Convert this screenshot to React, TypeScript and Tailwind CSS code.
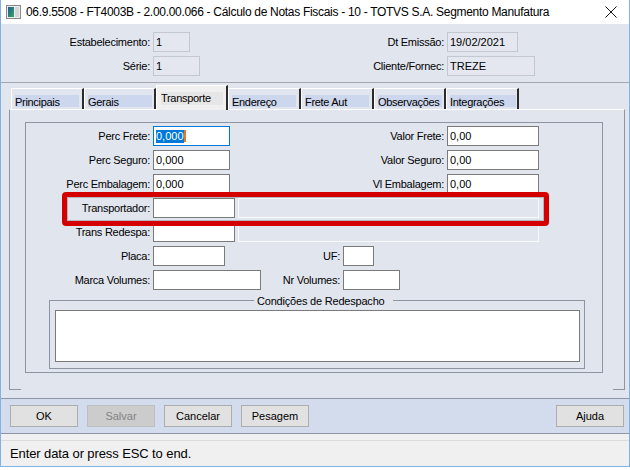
import React from "react";

type Kind = "edit" | "ro" | "dis" | "focus";
const KIND: Record<Kind, string> = {
  edit: "bg-white border-[#7a7a7a]",
  ro: "bg-[#e4e7ef] border-[#c3c7cf]",
  dis: "bg-[#e1e5ee] border-[#f8f9fb]",
  focus: "bg-white border-[#0078d7]",
};

function Field({ w, kind = "edit", children }: { w: string; kind?: Kind; children?: React.ReactNode }) {
  return (
    <div
      className={`${w} ${KIND[kind]} h-[20px] shrink-0 border flex items-center pl-[2px] text-[11px] leading-none text-black whitespace-nowrap overflow-hidden`}
    >
      {children}
    </div>
  );
}

function Label({ w, children }: { w: string; children: React.ReactNode }) {
  return (
    <div className={`${w} shrink-0 text-right pr-[3px] text-[11px] tracking-[-0.25px] leading-none text-black whitespace-nowrap`}>
      {children}
    </div>
  );
}

const TABS = [
  { t: "Principais", w: "w-[73px]", r: "w-[64px]" },
  { t: "Gerais", w: "w-[72px]", r: "w-[64px]" },
  { t: "Transporte", w: "w-[72px]", r: "w-[62px]", active: true },
  { t: "Endereço", w: "w-[73px]", r: "w-[64px]" },
  { t: "Frete Aut", w: "w-[73px]", r: "w-[64px]" },
  { t: "Observações", w: "w-[72px]", r: "w-[64px]" },
  { t: "Integrações", w: "w-[73px]", r: "w-[66px]" },
];

function Btn({ children, disabled }: { children: React.ReactNode; disabled?: boolean }) {
  return (
    <div
      className={`w-[68px] h-[22px] shrink-0 border flex items-center justify-center text-[11px] leading-none ${
        disabled ? "bg-[#cccccc] border-[#bfbfbf] text-[#838383]" : "bg-[#e1e1e1] border-[#adadad] text-black"
      }`}
    >
      {children}
    </div>
  );
}

export default function App() {
  return (
    <div className="w-[630px] h-[467px] border-x border-b border-[#7fb2e5] bg-[#e1e5ee] flex flex-col overflow-hidden font-['Liberation_Sans',Arial,sans-serif] text-black">
      {/* Title bar */}
      <div className="h-[24px] shrink-0 bg-white flex items-center">
        <svg className="ml-[5px] shrink-0" width="15" height="14" viewBox="0 0 15 14">
          <defs>
            <linearGradient id="ic" x1="0" y1="0" x2="1" y2="1">
              <stop offset="0" stopColor="#1d5d8c" />
              <stop offset="1" stopColor="#3aa36b" />
            </linearGradient>
          </defs>
          <rect x="0.5" y="0.5" width="14" height="13" fill="#ececec" stroke="#8a8a8a" />
          <rect x="2" y="2" width="6" height="10" fill="url(#ic)" />
          <rect x="9" y="2" width="4" height="10" fill="#d6d6d6" />
        </svg>
        <div className="ml-[5px] text-[12px] tracking-[-0.3px] whitespace-nowrap leading-none">
          06.9.5508 - FT4003B - 2.00.00.066 - Cálculo de Notas Fiscais - 10 - TOTVS S.A. Segmento Manufatura
        </div>
        <div className="flex-1" />
        <svg className="mr-[12px] shrink-0" width="12" height="12" viewBox="0 0 12 12">
          <path d="M0.5 0.5 L11.5 11.5 M11.5 0.5 L0.5 11.5" stroke="#111" strokeWidth="1" />
        </svg>
      </div>

      {/* Header */}
      <div className="shrink-0 pt-[8px] pb-[6px] border-b border-[#a2a7b1] flex flex-col gap-[4px]">
        <div className="flex items-center h-[20px]">
          <Label w="w-[152px]">Estabelecimento:</Label>
          <Field w="w-[37px]" kind="ro">1</Field>
          <Label w="w-[257px]">Dt Emissão:</Label>
          <Field w="w-[71px]" kind="ro">19/02/2021</Field>
        </div>
        <div className="flex items-center h-[20px]">
          <Label w="w-[152px]">Série:</Label>
          <Field w="w-[47px]" kind="ro">1</Field>
          <Label w="w-[247px]">Cliente/Fornec:</Label>
          <Field w="w-[88px]" kind="ro">TREZE</Field>
        </div>
      </div>

      {/* Tabs */}
      <div className="shrink-0 pt-[2px] h-[26px] pl-[10px] flex items-start">
        {TABS.map((tab) =>
          tab.active ? (
            <div
              key={tab.t}
              className={`${tab.w} h-[25px] shrink-0 relative z-10 bg-[#f0f0f0] border-t border-l border-white border-r-2 border-r-[#2b2b2b] pt-[6px] pl-[4px]`}
            >
              <div className={`${tab.r} h-[13px] bg-[#e6e6e6] text-[11px] tracking-[-0.3px] leading-[13px] whitespace-nowrap`}>
                {tab.t}
              </div>
            </div>
          ) : (
            <div
              key={tab.t}
              className={`${tab.w} h-[21px] mt-[3px] shrink-0 border-t border-l border-white border-r-2 border-r-[#2b2b2b] pt-[6px] pl-[3px]`}
            >
              <div
                className={`${tab.r} h-[12px] bg-[#ccd6ec] text-[11px] tracking-[-0.3px] leading-[14px] whitespace-nowrap overflow-visible`}
              >
                {tab.t}
              </div>
            </div>
          )
        )}
      </div>

      {/* Tab panel */}
      <div className="shrink-0 ml-[8px] w-[616px] h-[281px] border-t border-t-white border-x border-x-[#8d95a3] flex flex-col">
        <div className="relative ml-[15px] mt-[12px] w-[578px] h-[251px] shrink-0 border border-[#8d95a3] pt-[3px] flex flex-col gap-[4px]">
          <div className="flex items-center h-[20px]">
            <Label w="w-[127px]">Perc Frete:</Label>
            <Field w="w-[77px]" kind="focus">
              <span className="bg-[#0078d7] text-white leading-[13px] h-[13px]">0,000</span>
              <span className="w-[2px] h-[12px] bg-[#e8781e]" />
            </Field>
            <Label w="w-[217px]">Valor Frete:</Label>
            <Field w="w-[92px]">0,00</Field>
          </div>
          <div className="flex items-center h-[20px]">
            <Label w="w-[127px]">Perc Seguro:</Label>
            <Field w="w-[77px]">0,000</Field>
            <Label w="w-[217px]">Valor Seguro:</Label>
            <Field w="w-[92px]">0,00</Field>
          </div>
          <div className="flex items-center h-[20px]">
            <Label w="w-[127px]">Perc Embalagem:</Label>
            <Field w="w-[77px]">0,000</Field>
            <Label w="w-[217px]">Vl Embalagem:</Label>
            <Field w="w-[92px]">0,00</Field>
          </div>
          <div className="flex items-center h-[20px]">
            <Label w="w-[127px]">Transportador:</Label>
            <Field w="w-[82px]" />
            <div className="w-[3px] shrink-0" />
            <Field w="w-[301px]" kind="dis" />
          </div>
          <div className="flex items-center h-[20px]">
            <Label w="w-[127px]">Trans Redespa:</Label>
            <Field w="w-[82px]" />
            <div className="w-[3px] shrink-0" />
            <Field w="w-[301px]" kind="dis" />
          </div>
          <div className="flex items-center h-[20px]">
            <Label w="w-[127px]">Placa:</Label>
            <Field w="w-[72px]" />
            <Label w="w-[118px]">UF:</Label>
            <Field w="w-[31px]" />
          </div>
          <div className="flex items-center h-[20px]">
            <Label w="w-[127px]">Marca Volumes:</Label>
            <Field w="w-[108px]" />
            <Label w="w-[82px]">Nr Volumes:</Label>
            <Field w="w-[57px]" />
          </div>

          {/* Condições de Redespacho */}
          <div className="relative mt-[6px] ml-[23px] w-[536px] h-[69px] shrink-0 border border-[#8d95a3] pt-[9px] pl-[5px]">
            <div className="absolute top-[-7px] left-[204px] pl-[3px] pr-[8px] bg-[#e1e5ee] text-[11px] tracking-[-0.2px] leading-[14px] whitespace-nowrap">
              Condições de Redespacho
            </div>
            <div className="w-[525px] h-[52px] border border-[#7a7a7a] bg-white" />
          </div>

          {/* highlight annotation */}
          <div className="absolute left-[36px] top-[69px] w-[487px] h-[34px] border-[5px] border-[#d40000] rounded-[4px] pointer-events-none">
            <div className="w-full h-full border border-[#b3b7bf]" />
          </div>
        </div>
        <div className="mt-auto flex justify-between">
          <div className="w-[11px] h-px bg-[#8d95a3]" />
          <div className="w-[11px] h-px bg-[#8d95a3]" />
        </div>
      </div>

      {/* Button bar */}
      <div className="shrink-0 mt-[8px] h-[36px] border-y border-[#8d95a3] bg-[#d3dcec] flex items-center pl-[9px] pr-[5px] gap-[9px]">
        <Btn>OK</Btn>
        <Btn disabled>Salvar</Btn>
        <Btn>Cancelar</Btn>
        <Btn>Pesagem</Btn>
        <div className="flex-1" />
        <Btn>Ajuda</Btn>
      </div>

      {/* Status bar */}
      <div className="shrink-0 h-[32px] bg-[#f0f0f0] pt-[6px]">
        <div className="h-[26px] border-t border-[#dcdcdc] flex items-center pl-[9px] text-[13px] tracking-[-0.1px] leading-none whitespace-nowrap">
          Enter data or press ESC to end.
        </div>
      </div>
    </div>
  );
}
